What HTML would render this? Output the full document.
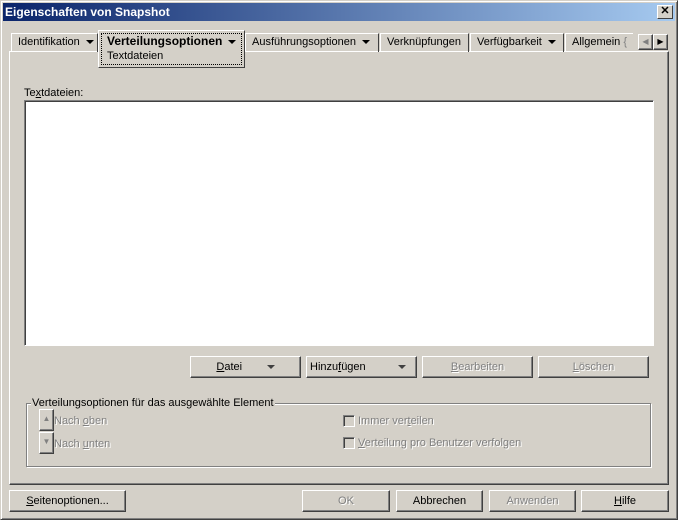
<!DOCTYPE html>
<html><head><style>
*{box-sizing:border-box;margin:0;padding:0}
body{width:678px;height:520px;background:#d4d0c8;font:11px "Liberation Sans",sans-serif;color:#000;position:relative;overflow:hidden}
.a{position:absolute}
.win{left:0;top:0;width:678px;height:520px;border:1px solid;border-color:#d4d0c8 #404040 #404040 #d4d0c8;box-shadow:inset 1px 1px #fff,inset -1px -1px #808080}
.title{left:3px;top:3px;width:672px;height:18px;background:linear-gradient(90deg,#0a246a,#a6caf0);color:#fff;font-weight:bold;font-size:12px;line-height:18px;padding-left:2px}
.close{left:657px;top:5px;width:16px;height:14px;background:#d4d0c8;border:1px solid;border-color:#fff #404040 #404040 #fff;font-size:11px;font-weight:bold;line-height:11px;text-align:center;color:#000}
.btn{border:1px solid;border-color:#fff #404040 #404040 #fff;box-shadow:inset -1px -1px #808080;text-align:center;line-height:20px;height:22px}
.dis{color:#808080;text-shadow:1px 1px #fff}
.tab{top:33px;height:19px;border:1px solid;border-bottom:none;border-color:#fff #404040 #404040 #fff;line-height:17px;padding-left:6px;white-space:nowrap}
.panel{left:9px;top:51px;width:660px;height:434px;border:1px solid;border-color:#fff #404040 #404040 #fff;box-shadow:inset -1px -1px #808080}
.list{left:24px;top:100px;width:630px;height:246px;background:#fff;border:1px solid;border-color:#808080 #fff #fff #808080;box-shadow:inset 1px 1px #404040}
.grp{left:26px;top:403px;width:625px;height:64px;border:1px solid #808080;box-shadow:1px 1px #fff,inset 1px 1px #fff}
.cb{width:12px;height:12px;border:1px solid;border-color:#808080 #fff #fff #808080;box-shadow:inset 1px 1px #404040}
u{text-decoration:underline}
.tri{display:inline-block;width:0;height:0;border-left:4px solid transparent;border-right:4px solid transparent;border-top:4px solid #000;vertical-align:middle}
</style></head><body>
<div class="a win"></div>
<div class="a title">Eigenschaften von Snapshot</div>
<div class="a close">✕</div>
<div class="a panel"></div>
<div class="a tab" style="left:11px;width:87px">Identifikation&nbsp;&nbsp;<span class="tri"></span></div>
<div class="a tab" style="left:245px;width:134px">Ausführungsoptionen&nbsp;&nbsp;<span class="tri"></span></div>
<div class="a tab" style="left:380px;width:89px">Verknüpfungen</div>
<div class="a tab" style="left:470px;width:94px">Verfügbarkeit&nbsp;&nbsp;<span class="tri"></span></div>
<div class="a tab" style="left:565px;width:68px;border-right:none">Allgemein <span style="color:#808080">{</span></div>
<div class="a" style="left:98px;top:30px;width:147px;height:38px;background:#d4d0c8;border:1px solid;border-color:#fff #404040 #404040 #fff"></div>
<div class="a" style="left:101px;top:33px;width:141px;height:32px;border:1px dotted #000;padding-left:5px;line-height:14px"><b style="font-size:12px">Verteilungsoptionen</b>&nbsp;&nbsp;<span class="tri"></span><br>Textdateien</div>
<div class="a btn" style="left:638px;top:34px;width:15px;height:16px;line-height:14px;font-size:8px;color:#808080">◀</div>
<div class="a btn" style="left:653px;top:34px;width:15px;height:16px;line-height:14px;font-size:8px">▶</div>
<div class="a" style="left:24px;top:87px">Te<u>x</u>tdateien:</div>
<div class="a list"></div>
<div class="a btn" style="left:190px;top:356px;width:111px"><u>D</u>atei&nbsp;&nbsp;&nbsp;&nbsp;&nbsp;&nbsp;&nbsp;&nbsp;<span class="tri" style="border-top-color:#404040"></span></div>
<div class="a btn" style="left:306px;top:356px;width:111px;text-align:left;padding-left:3px">Hinzu<u>f</u>ügen<span class="tri" style="position:absolute;right:10px;top:8px;border-top-color:#404040"></span></div>
<div class="a btn dis" style="left:422px;top:356px;width:111px"><u>B</u>earbeiten</div>
<div class="a btn dis" style="left:538px;top:356px;width:111px"><u>L</u>öschen</div>
<div class="a grp"></div>
<div class="a" style="left:31px;top:397px;background:#d4d0c8;padding:0 1px;line-height:12px">Verteilungsoptionen für das ausgewählte Element</div>
<div class="a btn" style="left:39px;top:409px;width:15px;height:22px;font-size:8px;color:#808080;line-height:18px">▲</div>
<div class="a dis" style="left:54px;top:415px">Nach <u>o</u>ben</div>
<div class="a btn" style="left:39px;top:432px;width:15px;height:22px;font-size:8px;color:#808080;line-height:18px">▼</div>
<div class="a dis" style="left:54px;top:438px">Nach <u>u</u>nten</div>
<div class="a cb" style="left:343px;top:415px"></div>
<div class="a dis" style="left:358px;top:415px">Immer ver<u>t</u>eilen</div>
<div class="a cb" style="left:343px;top:437px"></div>
<div class="a dis" style="left:358px;top:437px"><u>V</u>erteilung pro Benutzer verfolgen</div>
<div class="a btn" style="left:9px;top:490px;width:117px"><u>S</u>eitenoptionen...</div>
<div class="a btn dis" style="left:302px;top:490px;width:88px">OK</div>
<div class="a btn" style="left:396px;top:490px;width:87px">Abbrechen</div>
<div class="a btn dis" style="left:489px;top:490px;width:87px">Anwenden</div>
<div class="a btn" style="left:581px;top:490px;width:88px"><u>H</u>ilfe</div>
</body></html>
